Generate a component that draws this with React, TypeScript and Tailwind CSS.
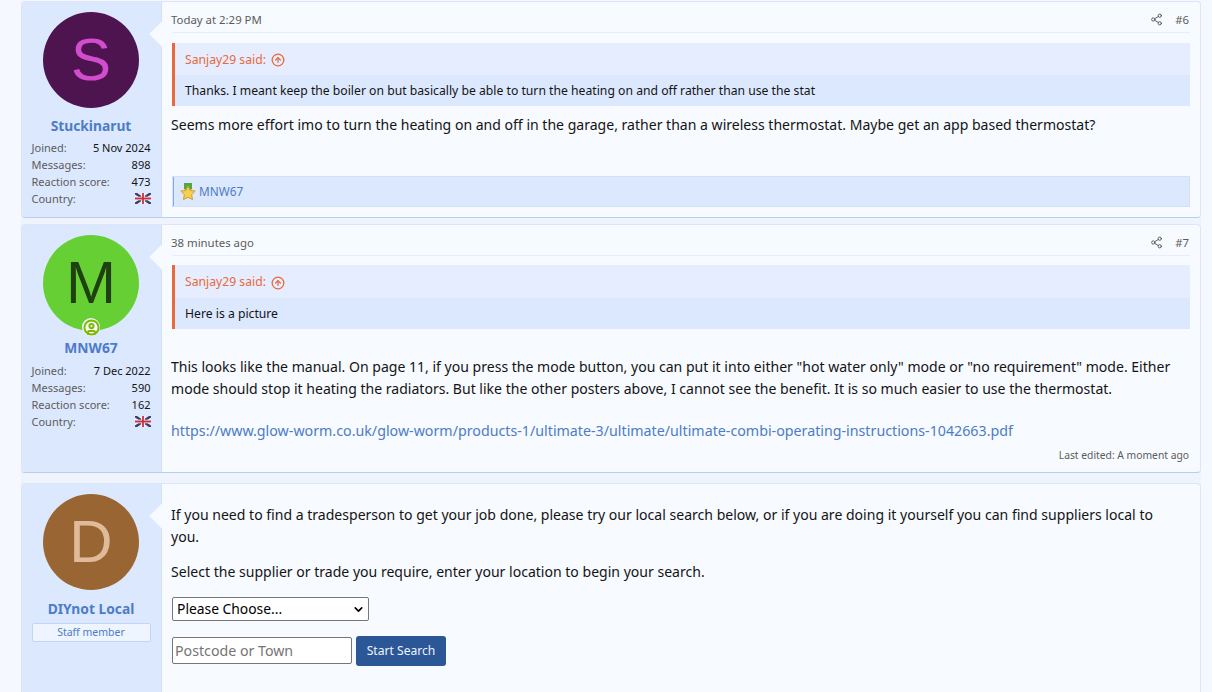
import { Share2, CircleArrowUp, CircleUser, ChevronDown } from "lucide-react";

const font = "font-['Noto_Sans','Open_Sans',sans-serif]";

function Flag() {
  return (
    <svg width="16" height="11" viewBox="0 0 16 11" className="block">
      <rect width="16" height="11" fill="#e8e8f0" />
      <path d="M0 0L16 11M16 0L0 11" stroke="#3a3f70" strokeWidth="2.4" />
      <path d="M8 0V11M0 5.5H16" stroke="#fff" strokeWidth="3.4" />
      <path d="M8 0V11M0 5.5H16" stroke="#c8313e" strokeWidth="1.8" />
    </svg>
  );
}

function Avatar({
  letter,
  bg,
  fg,
  online,
}: {
  letter: string;
  bg: string;
  fg: string;
  online?: boolean;
}) {
  return (
    <div
      className={`relative w-24 h-24 rounded-full flex items-center justify-center font-['Liberation_Sans',sans-serif] text-[60px] leading-none ${bg} ${fg}`}
    >
      {letter}
      {online && (
        <span className="absolute left-[39px] bottom-[-5px] w-[18px] h-[18px] rounded-full bg-[#f5f8ff] flex items-center justify-center">
          <CircleUser size={17} strokeWidth={2.8} className="text-[#7fb900]" />
        </span>
      )}
    </div>
  );
}

function Stats({
  joined,
  messages,
  score,
  className,
}: {
  joined: string;
  messages: string;
  score: string;
  className: string;
}) {
  const row = "flex justify-between h-[17px] leading-[17px]";
  const label = "text-[#5c5c5c]";
  return (
    <dl className={`w-[119px] text-[11px] text-[#141414] ${className}`}>
      <div className={row}>
        <dt className={label}>Joined:</dt>
        <dd>{joined}</dd>
      </div>
      <div className={row}>
        <dt className={label}>Messages:</dt>
        <dd>{messages}</dd>
      </div>
      <div className={row}>
        <dt className={label}>Reaction score:</dt>
        <dd>{score}</dd>
      </div>
      <div className={row}>
        <dt className={label}>Country:</dt>
        <dd className="flex items-center">
          <Flag />
        </dd>
      </div>
    </dl>
  );
}

function Quote({ children, tall }: { children: string; tall?: boolean }) {
  return (
    <div className="border-l-[3px] border-[#e9693b] bg-[#e6edfe] text-[12.2px]">
      <div
        className={`${tall ? "h-[33px]" : "h-[32px]"} pt-[2px] flex items-center pl-[10px] gap-[5px] text-[#e9693b]`}
      >
        Sanjay29 said:
        <CircleArrowUp size={14} strokeWidth={2.2} />
      </div>
      <div className="h-[31px] pt-[2px] flex items-center pl-[10px] bg-[#dce8fe] text-[#141414]">
        {children}
      </div>
    </div>
  );
}

function Meta({ time, num }: { time: string; num: string }) {
  return (
    <div className="h-[31px] pt-[5px] pr-px flex items-center justify-between border-b border-[#e6edfe] text-[11.4px] text-[#5c5c5c]">
      <span className="-ml-px">{time}</span>
      <span className="flex items-center gap-[12px]">
        <Share2 size={13} strokeWidth={1.8} />
        {num}
      </span>
    </div>
  );
}

function Card({
  user,
  children,
  className,
}: {
  user: React.ReactNode;
  children: React.ReactNode;
  className: string;
}) {
  return (
    <div
      className={`flex bg-[#f7faff] border border-[#dce6f8] border-b-[#b9cdef] rounded-[4px] overflow-hidden ${className}`}
    >
      <div className="w-[140px] shrink-0 bg-[#dce8fe] border-r border-[#d3e1f8] pt-[10px] pr-px flex flex-col items-center">
        {user}
      </div>
      <div className="relative flex-1 px-[10px] min-w-0">
        <span className="absolute left-[-9px] top-[23px] w-[18px] h-[18px] rotate-45 bg-[#f7faff]" />
        <div className="relative">{children}</div>
      </div>
    </div>
  );
}

export default function App() {
  const name = "text-[13.8px] font-bold text-[#4c7cc8] leading-[20px]";
  const body = "text-[14.05px] leading-[22px] -ml-px";
  return (
    <div
      className={`${font} h-[692px] overflow-hidden bg-[#f5f8ff] pt-px pl-[21px] pr-[11px] text-[#141414]`}
    >
      <div className="bg-[#eef3fc]">
        <Card
          className="h-[217px]"
          user={
            <>
              <Avatar letter="S" bg="bg-[#4e1450]" fg="text-[#d24dce]" />
              <div className={`${name} mt-[8px]`}>Stuckinarut</div>
              <Stats joined="5 Nov 2024" messages="898" score="473" className="mt-[3px]" />
            </>
          }
        >
          <Meta time="Today at 2:29 PM" num="#6" />
          <div className="mt-[10px]">
            <Quote>
              Thanks. I meant keep the boiler on but basically be able to turn the heating on and off rather than use the stat
            </Quote>
          </div>
          <p className={`mt-[8px] ${body}`}>
            Seems more effort imo to turn the heating on and off in the garage, rather than a wireless thermostat. Maybe get an app based thermostat?
          </p>
          <div className="mt-[40px] h-[31px] flex items-center gap-[3px] border-l-2 border-[#8aa9e0] bg-[#dce8fe] pl-[6px] text-[11.8px] text-[#4c7cc8] outline outline-[#d3e1f8] -outline-offset-1">
            <svg width="16" height="18" viewBox="0 0 16 18">
              <path d="M4 0h8v6l-4 2-4-2z" fill="#55a83f" />
              <path
                d="M8 3l2.2 4.4 5 .7-3.600 3.500.9 5L8 14.200l-4.500 2.400.9-5L.8 8.100l5-.7z"
                fill="#f6cf52"
                stroke="#d89a2b"
              />
            </svg>
            MNW67
          </div>
        </Card>

        <Card
          className="h-[249px] mt-[6px]"
          user={
            <>
              <Avatar letter="M" bg="bg-[#66cf33]" fg="text-[#1f4010]" online />
              <div className={`${name} mt-[7px]`}>MNW67</div>
              <Stats joined="7 Dec 2022" messages="590" score="162" className="mt-[4px]" />
            </>
          }
        >
          <Meta time="38 minutes ago" num="#7" />
          <div className="mt-[9px]">
            <Quote tall>Here is a picture</Quote>
          </div>
          <p className={`mt-[27px] ${body}`}>
            This looks like the manual. On page 11, if you press the mode button, you can put it into either "hot water only" mode or "no requirement" mode. Either mode should stop it heating the radiators. But like the other posters above, I cannot see the benefit. It is so much easier to use the thermostat.
          </p>
          <p className={`mt-[20px] text-[14.24px] leading-[22px] -ml-px text-[#4c7cc8]`}>
            https://www.glow-worm.co.uk/glow-worm/products-1/ultimate-3/ultimate/ultimate-combi-operating-instructions-1042663.pdf
          </p>
          <p className="mt-[6px] pr-px text-right text-[10.3px] leading-[15px] text-[#5c5c5c]">
            Last edited: A moment ago
          </p>
        </Card>

        <Card
          className="h-[240px] mt-[10px]"
          user={
            <>
              <Avatar letter="D" bg="bg-[#996633]" fg="text-[#e0bb99]" />
              <div className={`${name} mt-[9px]`}>DIYnot Local</div>
              <div className="w-[119px] h-[19px] mt-[4px] flex items-center justify-center border border-[#bfd5fb] rounded-[2px] bg-[#eef5ff] text-[10.5px] text-[#4c7cc8]">
                Staff member
              </div>
            </>
          }
        >
          <p className={`pt-[20px] ${body}`}>
            If you need to find a tradesperson to get your job done, please try our local search below, or if you are doing it yourself you can find suppliers local to
            <br />
            you.
          </p>
          <p className={`mt-[13px] ${body}`}>
            Select the supplier or trade you require, enter your location to begin your search.
          </p>
          <div className="mt-[14px] w-[197px] h-[24px] pt-px flex items-center justify-between pl-[4px] pr-[3px] bg-white border border-[#767676] rounded-[2px] text-[13.85px] text-black">
            Please Choose...
            <ChevronDown size={13} strokeWidth={3} />
          </div>
          <div className="mt-[15px] flex items-start gap-[4px]">
            <input
              readOnly
              placeholder="Postcode or Town"
              className="w-[180px] h-[27px] mt-px px-[2px] bg-white border border-[#767676] rounded-[2px] text-[14.2px] placeholder-[#757575] outline-none"
            />
            <button className="w-[90px] h-[30px] bg-[#2b5797] rounded-[3px] text-[12.1px] text-[#f0f4fd]">
              Start Search
            </button>
          </div>
        </Card>
      </div>
    </div>
  );
}
